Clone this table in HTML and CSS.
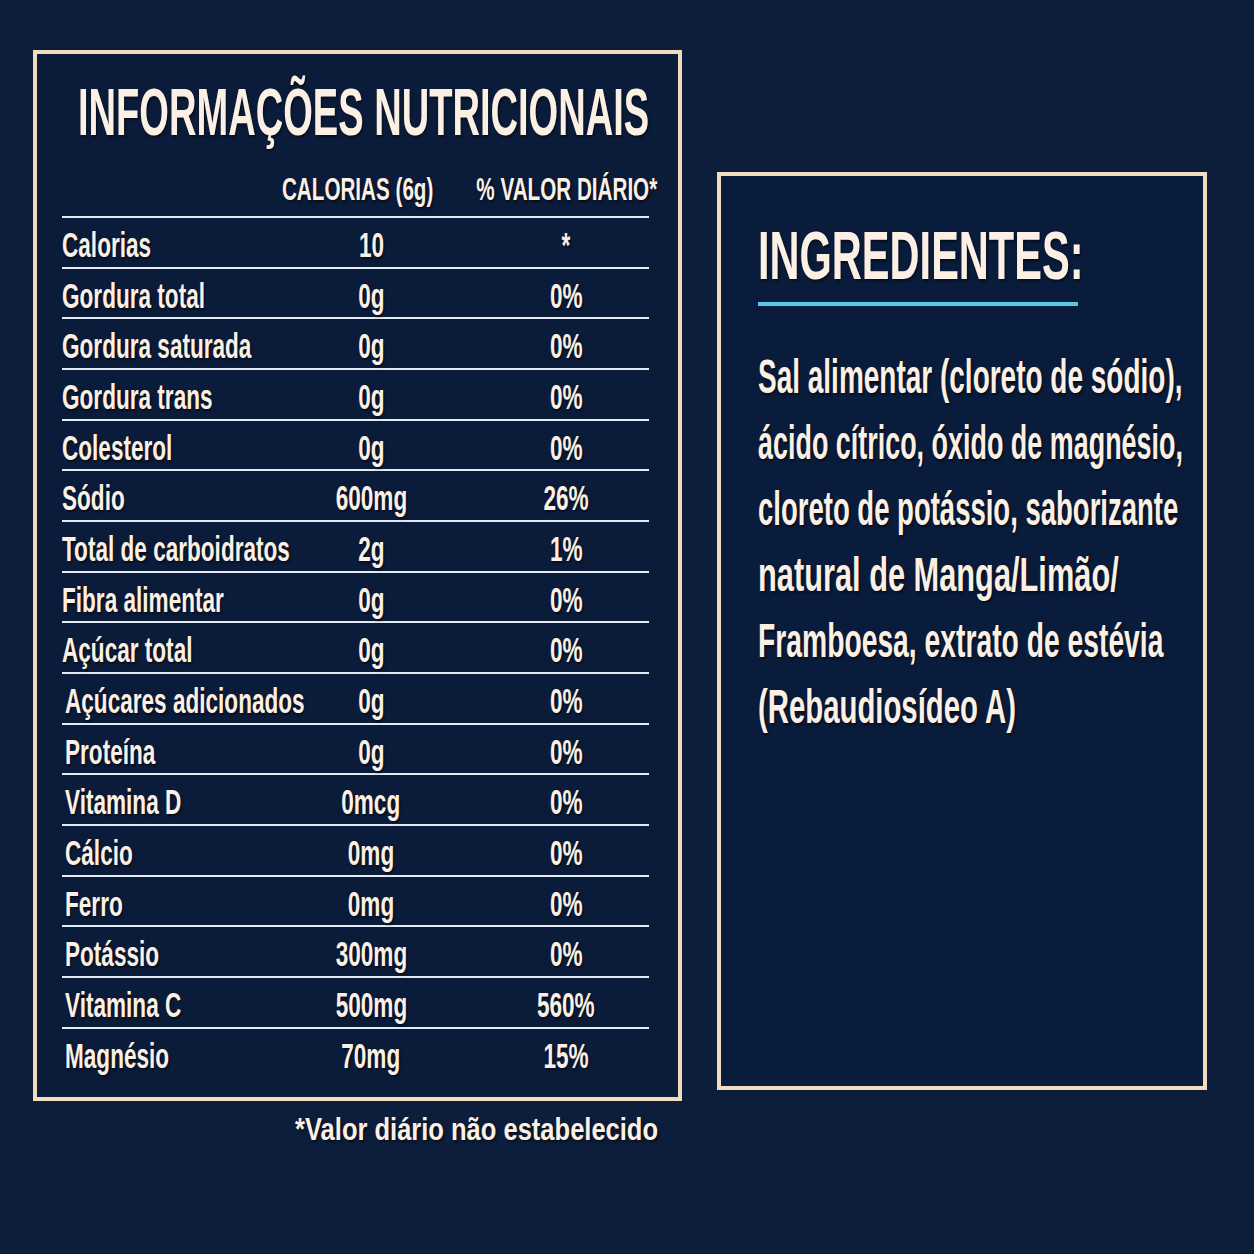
FILE: index.html
```html
<!DOCTYPE html>
<html lang="pt-BR">
<head>
<meta charset="utf-8">
<title>Informações Nutricionais</title>
<link rel="stylesheet" href="styles.css">
</head>
<body>
<main class="page">
  <section class="left">
    <div class="nutri">
      <h1 class="title"><span class="sq sq-title">INFORMAÇÕES NUTRICIONAIS</span></h1>
      <div class="table">
        <div class="row head">
          <span class="c1"></span>
          <span class="c2 hc2"><span class="sq sq-head">CALORIAS (6g)</span></span>
          <span class="c3 hc3"><span class="sq sq-head">% VALOR DIÁRIO*</span></span>
        </div>
        <div class="row"><span class="c1"><span class="sq sq-row">Calorias</span></span><span class="c2"><span class="sq sq-row">10</span></span><span class="c3"><span class="sq sq-row">*</span></span></div>
        <div class="row"><span class="c1"><span class="sq sq-row">Gordura total</span></span><span class="c2"><span class="sq sq-row">0g</span></span><span class="c3"><span class="sq sq-row">0%</span></span></div>
        <div class="row"><span class="c1"><span class="sq sq-row">Gordura saturada</span></span><span class="c2"><span class="sq sq-row">0g</span></span><span class="c3"><span class="sq sq-row">0%</span></span></div>
        <div class="row"><span class="c1"><span class="sq sq-row">Gordura trans</span></span><span class="c2"><span class="sq sq-row">0g</span></span><span class="c3"><span class="sq sq-row">0%</span></span></div>
        <div class="row"><span class="c1"><span class="sq sq-row">Colesterol</span></span><span class="c2"><span class="sq sq-row">0g</span></span><span class="c3"><span class="sq sq-row">0%</span></span></div>
        <div class="row"><span class="c1"><span class="sq sq-row">Sódio</span></span><span class="c2"><span class="sq sq-row">600mg</span></span><span class="c3"><span class="sq sq-row">26%</span></span></div>
        <div class="row"><span class="c1"><span class="sq sq-row">Total de carboidratos</span></span><span class="c2"><span class="sq sq-row">2g</span></span><span class="c3"><span class="sq sq-row">1%</span></span></div>
        <div class="row"><span class="c1"><span class="sq sq-row">Fibra alimentar</span></span><span class="c2"><span class="sq sq-row">0g</span></span><span class="c3"><span class="sq sq-row">0%</span></span></div>
        <div class="row"><span class="c1"><span class="sq sq-row">Açúcar total</span></span><span class="c2"><span class="sq sq-row">0g</span></span><span class="c3"><span class="sq sq-row">0%</span></span></div>
        <div class="row"><span class="c1 ind"><span class="sq sq-row">Açúcares adicionados</span></span><span class="c2"><span class="sq sq-row">0g</span></span><span class="c3"><span class="sq sq-row">0%</span></span></div>
        <div class="row"><span class="c1 ind"><span class="sq sq-row">Proteína</span></span><span class="c2"><span class="sq sq-row">0g</span></span><span class="c3"><span class="sq sq-row">0%</span></span></div>
        <div class="row"><span class="c1 ind"><span class="sq sq-row">Vitamina D</span></span><span class="c2"><span class="sq sq-row">0mcg</span></span><span class="c3"><span class="sq sq-row">0%</span></span></div>
        <div class="row"><span class="c1 ind"><span class="sq sq-row">Cálcio</span></span><span class="c2"><span class="sq sq-row">0mg</span></span><span class="c3"><span class="sq sq-row">0%</span></span></div>
        <div class="row"><span class="c1 ind"><span class="sq sq-row">Ferro</span></span><span class="c2"><span class="sq sq-row">0mg</span></span><span class="c3"><span class="sq sq-row">0%</span></span></div>
        <div class="row"><span class="c1 ind"><span class="sq sq-row">Potássio</span></span><span class="c2"><span class="sq sq-row">300mg</span></span><span class="c3"><span class="sq sq-row">0%</span></span></div>
        <div class="row"><span class="c1 ind"><span class="sq sq-row">Vitamina C</span></span><span class="c2"><span class="sq sq-row">500mg</span></span><span class="c3"><span class="sq sq-row">560%</span></span></div>
        <div class="row last"><span class="c1 ind"><span class="sq sq-row">Magnésio</span></span><span class="c2"><span class="sq sq-row">70mg</span></span><span class="c3"><span class="sq sq-row">15%</span></span></div>
      </div>
    </div>
    <p class="foot"><span class="sq sq-foot">*Valor diário não estabelecido</span></p>
  </section>

  <section class="ingr">
    <h2 class="ingr-title"><span class="sq sq-ititle">INGREDIENTES:</span></h2>
    <div class="ingr-rule"></div>
    <p class="ingr-text">
      <span class="sq sq-para l1">Sal alimentar (cloreto de sódio),</span><br>
      <span class="sq sq-para l2">ácido cítrico, óxido de magnésio,</span><br>
      <span class="sq sq-para l3">cloreto de potássio, saborizante</span><br>
      <span class="sq sq-para l4">natural de Manga/Limão/</span><br>
      <span class="sq sq-para l5">Framboesa, extrato de estévia</span><br>
      <span class="sq sq-para l6">(Rebaudiosídeo A)</span>
    </p>
  </section>
</main>
</body>
</html>
```

FILE: styles.css
```css
* { box-sizing: border-box; margin: 0; padding: 0; }

html, body {
  width: 1254px;
  height: 1254px;
  background: #0d1e3c;
  overflow: hidden;
}

body {
  font-family: "Liberation Sans", Arial, sans-serif;
  font-weight: 700;
  color: #fbf0e3;
}

.page {
  display: flex;
  align-items: flex-start;
  padding: 50px 0 0 33px;
}

.sq {
  display: inline-block;
  flex: none;
  white-space: nowrap;
  text-shadow: 2px 2px 3px rgba(0, 0, 0, 0.55);
}

/* ---------- nutrition panel ---------- */
.left {
  width: 649px;
  display: flex;
  flex-direction: column;
}

.nutri {
  height: 1051px;
  border: 4px solid #f2dcc1;
  background: #0b1c3b;
  padding: 25px 0 0 25px;
  overflow: hidden;
}

.title {
  font-size: 66px;
  line-height: 66px;
  font-weight: 700;
  padding-left: 16px;
  white-space: nowrap;
}
.sq-title { transform: scaleX(0.577); transform-origin: left center; }

.table {
  width: 587px;
  margin-top: 29px;
}

.row {
  display: grid;
  grid-template-columns: 228px 162px 197px;
  height: 50.67px;
  border-bottom: 2px solid #e4eaf1;
  font-size: 35px;
  line-height: 42.67px;
  padding-top: 6px;
}
.row.last { border-bottom: none; }

.row.head {
  height: 44px;
  font-size: 31px;
  line-height: 31px;
  padding-top: 0;
}

.c1 { display: flex; justify-content: flex-start; min-width: 0; }
.c1.ind { padding-left: 3px; }
.c2, .c3 { display: flex; justify-content: center; min-width: 0; }
.c3 { padding-left: 31px; }
.hc2 { transform: translateX(-13px); }
.hc3 { transform: translateX(1px); }

.sq-row { transform: scaleX(0.645); }
.c1 .sq-row { transform-origin: left center; }
.c2 .sq, .c3 .sq { transform-origin: center center; }
.sq-head { transform: scaleX(0.666); }

.foot {
  font-size: 31px;
  line-height: 31px;
  text-align: right;
  margin-top: 13px;
  padding-right: 24px;
  white-space: nowrap;
}
.sq-foot { transform: scaleX(0.823); transform-origin: right center; }

/* ---------- ingredients panel ---------- */
.ingr {
  width: 490px;
  height: 918px;
  margin: 122px 0 0 35px;
  border: 4px solid #f2dcc1;
  background: #0a1c3c;
  padding: 45px 0 0 37px;
  overflow: hidden;
}

.ingr-title {
  font-size: 68px;
  line-height: 68px;
  font-weight: 700;
  white-space: nowrap;
}
.sq-ititle { transform: scaleX(0.611); transform-origin: left center; }

.ingr-rule {
  width: 320px;
  height: 4px;
  margin-top: 13px;
  background: #57c6e8;
}

.ingr-text {
  margin-top: 38px;
  font-size: 48px;
  line-height: 66px;
  white-space: nowrap;
}
.sq-para { transform-origin: left center; }
.l1 { transform: scaleX(0.583); }
.l2 { transform: scaleX(0.561); }
.l3 { transform: scaleX(0.573); }
.l4 { transform: scaleX(0.641); }
.l5 { transform: scaleX(0.589); }
.l6 { transform: scaleX(0.611); }
```
